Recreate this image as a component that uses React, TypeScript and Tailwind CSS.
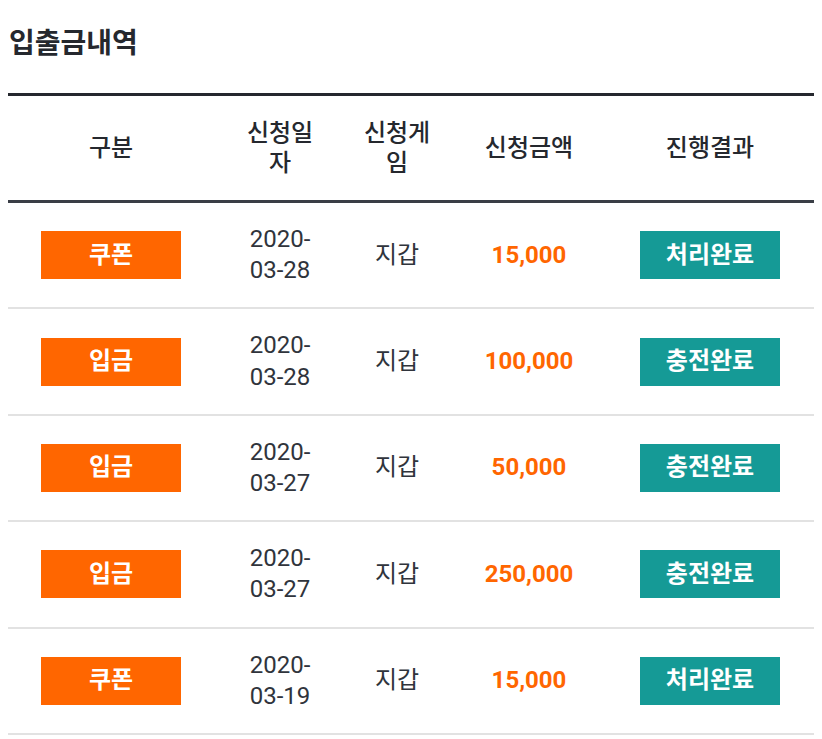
import React from 'react';

type Row = {
  kind: string;
  date: string;
  game: string;
  amount: string;
  result: string;
};

const rows: Row[] = [
  { kind: '쿠폰', date: '2020-03-28', game: '지갑', amount: '15,000', result: '처리완료' },
  { kind: '입금', date: '2020-03-28', game: '지갑', amount: '100,000', result: '충전완료' },
  { kind: '입금', date: '2020-03-27', game: '지갑', amount: '50,000', result: '충전완료' },
  { kind: '입금', date: '2020-03-27', game: '지갑', amount: '250,000', result: '충전완료' },
  { kind: '쿠폰', date: '2020-03-19', game: '지갑', amount: '15,000', result: '처리완료' }
];

const cols = 'grid grid-cols-[206px_132px_102px_162px_204px]';

const App: React.FC = () => {
  return (
    <div
      className="min-h-screen bg-white px-2 pt-[25px] text-[#2b2e35]"
      style={{ fontFamily: 'Roboto, "Noto Sans CJK KR", sans-serif' }}
    >
      <h2 className="pl-[1px] text-[28px] font-bold leading-[38px] text-[#25282e]">입출금내역</h2>

      <div className="mt-[30px] border-t-[3px] border-[#25282e]">
        {/* header */}
        <div className={`${cols} border-b-[3px] border-[#3a3e46] text-[24px] font-medium leading-[30px] text-[#25282e]`}>
          <div className="flex items-center justify-center py-[22px]">구분</div>
          <div className="flex items-center justify-center py-[22px]">
            <div className="w-[78px] text-center">신청일자</div>
          </div>
          <div className="flex items-center justify-center py-[22px]">
            <div className="w-[78px] text-center">신청게임</div>
          </div>
          <div className="flex items-center justify-center py-[22px]">신청금액</div>
          <div className="flex items-center justify-center py-[22px] pr-[4px]">진행결과</div>
        </div>

        {/* rows */}
        {rows.map((r, i) => (
          <div key={i} className={`${cols} border-b-2 border-[#e2e2e2] text-[24px] leading-[31.2px]`}>
            <div className="flex items-center justify-center py-[21px]">
              <span className="flex h-[48px] w-[140px] items-center justify-center bg-[#ff6600] font-bold text-white">
                {r.kind}
              </span>
            </div>
            <div className="flex flex-col items-center justify-center py-[21px] text-[#30343c]">
              <span>{r.date.slice(0, 5)}</span>
              <span>{r.date.slice(5)}</span>
            </div>
            <div className="flex items-center justify-center py-[21px] text-[#30343c]">{r.game}</div>
            <div className="flex items-center justify-center py-[21px] font-bold text-[#ff6600]">{r.amount}</div>
            <div className="flex items-center justify-center py-[21px] pr-[4px]">
              <span className="flex h-[48px] w-[140px] items-center justify-center bg-[#159a96] font-bold text-white">
                {r.result}
              </span>
            </div>
          </div>
        ))}
      </div>
    </div>
  );
};

export default App;
